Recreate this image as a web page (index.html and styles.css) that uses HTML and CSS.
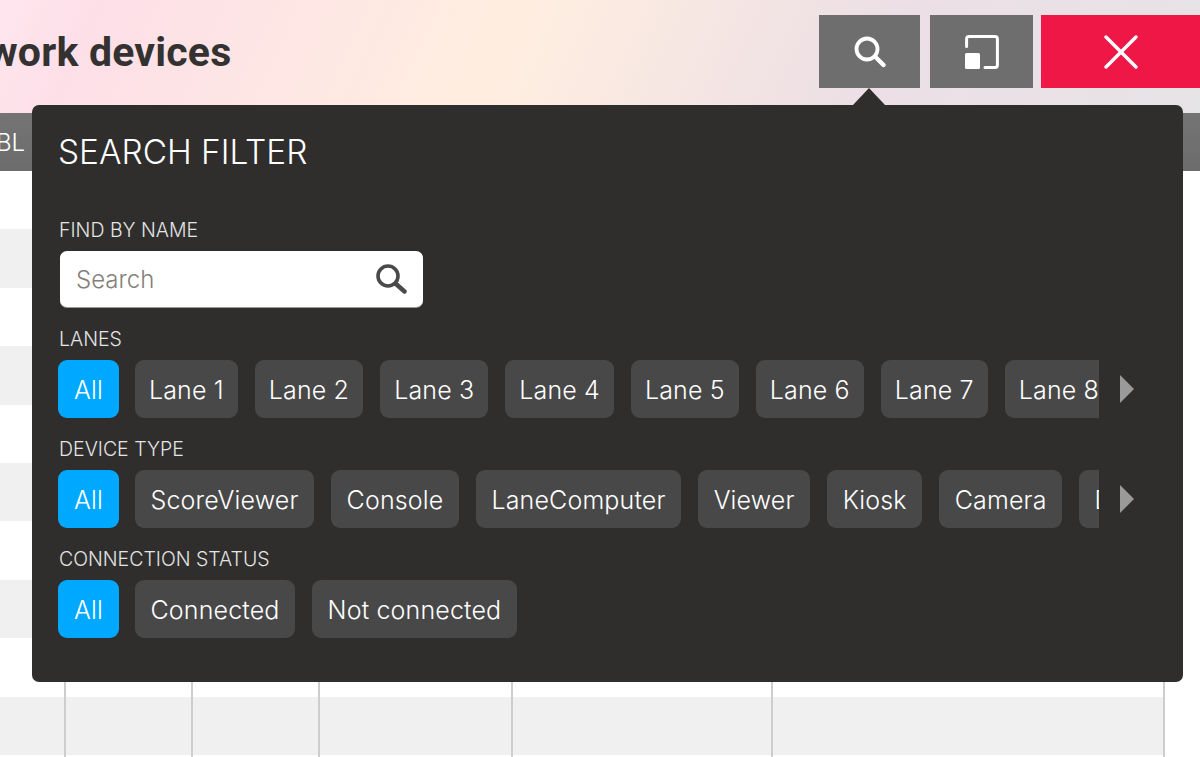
FILE: index.html
```html
<!DOCTYPE html>
<html lang="en">
<head>
<meta charset="utf-8">
<title>Network devices</title>
<link rel="stylesheet" href="styles.css">
</head>
<body>
<div class="page">
  <header class="topbar">
    <h1 class="title">Network devices</h1>
    <div class="actions">
      <button class="action action-search" type="button" aria-label="Search">
        <svg width="32" height="32" viewBox="0 0 32 32"><circle cx="13" cy="13" r="10.5" fill="none" stroke="#fff" stroke-width="3.8"/><path d="M21 20.5l8.5 8.5" fill="none" stroke="#fff" stroke-width="4.4" stroke-linecap="round"/></svg>
      </button>
      <button class="action action-resize" type="button" aria-label="Resize">
        <svg width="34" height="34" viewBox="0 0 34 34"><path d="M1.6 11.5V4a2.4 2.4 0 0 1 2.4-2.4h26a2.4 2.4 0 0 1 2.4 2.4v26a2.4 2.4 0 0 1-2.4 2.4H20" fill="none" stroke="#fff" stroke-width="3" stroke-linecap="round"/><rect x="0" y="18" width="15" height="16" rx="1.5" fill="#fff"/></svg>
      </button>
      <button class="action action-close" type="button" aria-label="Close">
        <svg width="34" height="34" viewBox="0 0 34 34"><path d="M2 2l30 30M32 2L2 32" fill="none" stroke="#fff" stroke-width="3.4" stroke-linecap="round"/></svg>
      </button>
    </div>
  </header>

  <div class="table">
    <div class="thead">BL</div>
    <div class="row"><i></i><i></i><i></i><i></i><i></i><i></i></div>
    <div class="row alt"><i></i><i></i><i></i><i></i><i></i><i></i></div>
    <div class="row"><i></i><i></i><i></i><i></i><i></i><i></i></div>
    <div class="row alt"><i></i><i></i><i></i><i></i><i></i><i></i></div>
    <div class="row"><i></i><i></i><i></i><i></i><i></i><i></i></div>
    <div class="row alt"><i></i><i></i><i></i><i></i><i></i><i></i></div>
    <div class="row"><i></i><i></i><i></i><i></i><i></i><i></i></div>
    <div class="row alt"><i></i><i></i><i></i><i></i><i></i><i></i></div>
    <div class="row"><i></i><i></i><i></i><i></i><i></i><i></i></div>
    <div class="row alt"><i></i><i></i><i></i><i></i><i></i><i></i></div>
    <div class="row"><i></i><i></i><i></i><i></i><i></i><i></i></div>
  </div>

  <section class="panel">
    <h2 class="panel-title">SEARCH FILTER</h2>

    <div class="group group-name">
      <div class="label">FIND BY NAME</div>
      <div class="search">
        <span class="placeholder">Search</span>
        <svg width="32" height="32" viewBox="0 0 32 32"><circle cx="13" cy="13" r="10" fill="none" stroke="#4a4a4a" stroke-width="3.6"/><path d="M20.5 20.5l9 8" fill="none" stroke="#4a4a4a" stroke-width="4.4" stroke-linecap="round"/></svg>
      </div>
    </div>

    <div class="group">
      <div class="label">LANES</div>
      <div class="chip-row chip-row-lanes">
        <div class="chips">
          <span class="chip on">All</span>
          <span class="chip">Lane 1</span>
          <span class="chip">Lane 2</span>
          <span class="chip">Lane 3</span>
          <span class="chip">Lane 4</span>
          <span class="chip">Lane 5</span>
          <span class="chip">Lane 6</span>
          <span class="chip">Lane 7</span>
          <span class="chip">Lane 8</span>
        </div>
        <span class="more"></span>
      </div>
    </div>

    <div class="group">
      <div class="label">DEVICE TYPE</div>
      <div class="chip-row">
        <div class="chips">
          <span class="chip on">All</span>
          <span class="chip">ScoreViewer</span>
          <span class="chip">Console</span>
          <span class="chip">LaneComputer</span>
          <span class="chip">Viewer</span>
          <span class="chip">Kiosk</span>
          <span class="chip">Camera</span>
          <span class="chip">Display</span>
        </div>
        <span class="more"></span>
      </div>
    </div>

    <div class="group">
      <div class="label">CONNECTION STATUS</div>
      <div class="chip-row">
        <div class="chips">
          <span class="chip on">All</span>
          <span class="chip">Connected</span>
          <span class="chip">Not connected</span>
        </div>
      </div>
    </div>
  </section>
</div>
</body>
</html>
```
FILE: styles.css
```css
* { box-sizing: border-box; }
html, body { margin: 0; padding: 0; }
body { background: #fff; font-family: Inter, Roboto, "Liberation Sans", sans-serif; }
.page { position: relative; width: 1200px; height: 757px; overflow: hidden; background: #fff; }

.topbar {
  height: 113px;
  display: flex;
  justify-content: space-between;
  padding-top: 15px;
  background: linear-gradient(115deg, #ffe6ee 0%, #fddfe8 8%, #ffeee0 42%, #ecdfe5 72%, #e6e3e7 100%);
}
.title {
  margin: 13px 0 0 -78px;
  font-family: Roboto, sans-serif;
  font-size: 41px;
  line-height: 48px;
  font-weight: 700;
  letter-spacing: .2px;
  color: #333231;
  white-space: nowrap;
}
.actions { display: flex; height: 73px; margin-right: -20px; }
.action {
  display: flex;
  align-items: center;
  justify-content: center;
  height: 73px;
  padding: 0;
  border: 0;
  background: #6e6e6e;
}
.action-search { width: 101px; margin-right: 10px; }
.action-resize { width: 103px; margin-right: 8px; }
.action-close { width: 179px; padding-right: 20px; background: #ef1746; }

.table { height: 644px; overflow: hidden; }
.thead {
  height: 58px;
  font-size: 24px;
  line-height: 60px;
  font-weight: 300;
  color: #fff;
  background: linear-gradient(#747474, #6c6c6c);
  text-indent: -4px;
}
.row {
  display: grid;
  grid-template-columns: 66px 127px 127px 193px 260px 392px;
  width: 1165px;
  height: 58.4px;
}
.row.alt { background: #f0f0f0; }
.row i { border-right: 2px solid #cdcdcd; }

.panel {
  position: absolute;
  left: 32px;
  top: 105px;
  width: 1151px;
  height: 577px;
  padding: 26px 26px 0;
  border-radius: 7px;
  background: #2f2e2d;
}
.panel::before {
  content: "";
  position: absolute;
  left: 821px;
  top: -17px;
  border-left: 16px solid transparent;
  border-right: 16px solid transparent;
  border-bottom: 17px solid #2f2e2d;
}
.panel-title {
  margin: 0 0 46px;
  font-size: 33.4px;
  line-height: 42px;
  font-weight: 300;
  color: #fff;
}
.label {
  height: 22px;
  margin-bottom: 10px;
  padding-left: 1px;
  font-size: 19.5px;
  line-height: 22px;
  font-weight: 300;
  color: #e4e4e4;
}
.group { margin-bottom: 20px; }
.group-name { margin-bottom: 21px; }

.search {
  display: flex;
  align-items: center;
  justify-content: space-between;
  width: 363px;
  height: 56px;
  margin: 1px 0 0 2px;
  padding: 0 16px 0 16px;
  border-radius: 7px;
  background: #fff;
  box-shadow: 0 1px 0 #9a9a9a;
}
.placeholder { font-size: 24px; font-weight: 300; color: #84807c; }

.chip-row { display: flex; align-items: center; }
.chips { display: flex; gap: 17px; width: 1041px; overflow: hidden; }
.chip {
  flex: none;
  height: 58px;
  padding: 0 15.5px;
  border-radius: 9px;
  font-size: 25px;
  line-height: 60px;
  font-weight: 300;
  letter-spacing: .15px;
  color: #fff;
  background: #484848;
}
.chip-row-lanes .chip { padding: 0 14px; }
.chip-row .chip.on { padding: 0 16px; margin-right: -1px; background: #00a8ff; }
.more {
  width: 0;
  height: 0;
  margin-left: 21px;
  border-top: 14px solid transparent;
  border-bottom: 14px solid transparent;
  border-left: 14px solid #9a9a9a;
}
```
